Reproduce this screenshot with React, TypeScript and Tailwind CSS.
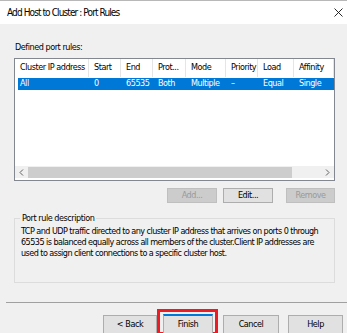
const font = {
  fontFamily: '"DejaVu Sans Condensed", "Liberation Sans", Arial, sans-serif',
  letterSpacing: "-0.45px",
};

const columns = [
  { label: "Cluster IP address", width: 74 },
  { label: "Start", width: 32 },
  { label: "End", width: 32 },
  { label: "Prot...", width: 33 },
  { label: "Mode", width: 40 },
  { label: "Priority", width: 32 },
  { label: "Load", width: 36 },
  { label: "Affinity", width: 40 },
];

const row = ["All", "0", "65535", "Both", "Multiple", "–", "Equal", "Single"];

function Btn({ label, width, disabled }: { label: string; width: number; disabled?: boolean }) {
  return (
    <div
      className={`h-[15px] flex items-center justify-center border text-[9px] ${
        disabled ? "bg-[#cccccc] border-[#bfbfbf] text-[#9a9a9a]" : "bg-[#e1e1e1] border-[#adadad] text-black"
      }`}
      style={{ width }}
    >
      {label}
    </div>
  );
}

export default function App() {
  return (
    <div className="w-[347px] h-[333px] overflow-hidden bg-[#f0f0f0] border-t border-[#b8b8b8] text-black" style={font}>
      <div className="h-[23px] bg-white flex items-center justify-between pl-[7px] pr-[4px]">
        <span className="text-[10px] leading-none tracking-[-0.9px]">Add Host to Cluster : Port Rules</span>
        <svg width="9" height="9" viewBox="0 0 9 9">
          <path d="M0.5 0.5 L8.5 8.5 M8.5 0.5 L0.5 8.5" stroke="#111" strokeWidth="0.9" />
        </svg>
      </div>

      <div className="px-[14px]">
        <div className="mt-[18px] h-[11px] leading-[11px] text-[9px] pl-[1px]">Defined port rules:</div>

        <div className="mt-[5px] w-[321px] h-[123px] border border-[#828790] bg-white flex flex-col">
          <div className="flex h-[18px]">
            {columns.map((c) => (
              <div
                key={c.label}
                className="h-full flex items-center pl-[5px] border-r border-[#e5e5e5] text-[9px] whitespace-nowrap overflow-hidden"
                style={{ width: c.width }}
              >
                {c.label}
              </div>
            ))}
          </div>
          <div className="mt-[1px] ml-[3px] h-[12px] bg-[#0078d7] text-white flex">
            {row.map((v, i) => (
              <div
                key={i}
                className="h-full flex items-center pl-[5px] text-[9px] whitespace-nowrap"
                style={{ width: i === 0 ? columns[0].width - 3 : columns[i].width }}
              >
                {i === 0 ? <span className="-ml-[3px]">{v}</span> : v}
              </div>
            ))}
          </div>
          <div className="flex-1" />
          <div className="h-[12px] mb-[2px] flex items-center bg-[#f0f0f0]">
            <div className="w-[13px] flex justify-center">
              <svg width="5" height="7" viewBox="0 0 5 7">
                <path d="M4 0.5 L1 3.5 L4 6.5" stroke="#606060" fill="none" strokeWidth="1" />
              </svg>
            </div>
            <div className="w-[264px] h-[11px] bg-[#cdcdcd]" />
            <div className="flex-1" />
            <div className="w-[13px] flex justify-center">
              <svg width="5" height="7" viewBox="0 0 5 7">
                <path d="M1 0.5 L4 3.5 L1 6.5" stroke="#606060" fill="none" strokeWidth="1" />
              </svg>
            </div>
          </div>
        </div>

        <div className="mt-[7px] flex justify-end gap-[6px] w-[321px]">
          <Btn label="Add..." width={50} disabled />
          <Btn label="Edit..." width={50} />
          <div className="w-[1px]" />
          <Btn label="Remove" width={49} disabled />
        </div>

        <div className="relative mt-[15px] w-[321px] h-[65px] border border-[#dcdcdc]">
          <span className="absolute -top-[7px] left-[5px] px-[2px] bg-[#f0f0f0] text-[9px] leading-[12px]">
            Port rule description
          </span>
          <p className="pt-[7px] pl-[6px] text-[9px] leading-[11px] whitespace-nowrap tracking-[-0.55px]">
            TCP and UDP traffic directed to any cluster IP address that arrives on ports 0 through
            <br />
            65535 is balanced equally across all members of the cluster.Client IP addresses are
            <br />
            used to assign client connections to a specific cluster host.
          </p>
        </div>
      </div>

      <div className="mt-[19px] ml-[6px] h-[2px] border-t border-[#a0a0a0]" />

      <div className="mt-[5px] flex items-start pl-[103px] text-[9px]">
        <div className="mt-[6px] w-[54px] h-[20px] bg-[#e1e1e1] border border-[#adadad] flex items-center justify-center">
          &lt; Back
        </div>
        <div className="w-[61px] h-[26px] border-[3px] border-[#ed1c24] pl-[3px] pr-[2px] pt-[2px]">
          <div className="h-[20px] bg-[#e1e1e1] border border-[#adadad] border-t-2 border-t-[#0078d7] flex items-center justify-center">
            Finish
          </div>
        </div>
        <div className="mt-[6px] ml-[5px] w-[56px] h-[20px] bg-[#e1e1e1] border border-[#adadad] flex items-center justify-center">
          Cancel
        </div>
        <div className="mt-[6px] ml-[9px] w-[55px] h-[20px] bg-[#e1e1e1] border border-[#adadad] flex items-center justify-center">
          Help
        </div>
      </div>
    </div>
  );
}
